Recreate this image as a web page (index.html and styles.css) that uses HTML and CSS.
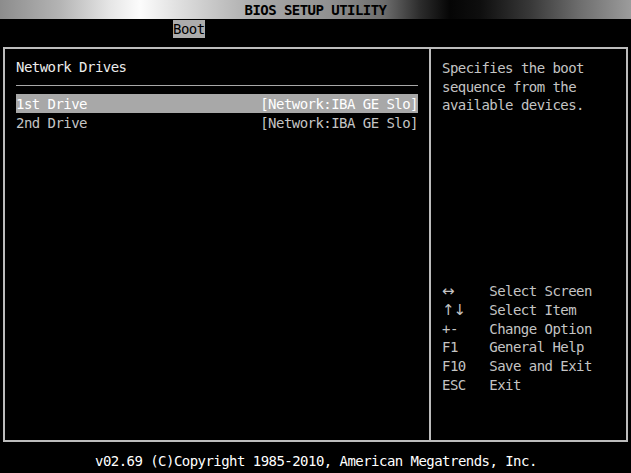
FILE: index.html
```html
<!DOCTYPE html>
<html lang="en">
<head>
<meta charset="utf-8">
<title>BIOS SETUP UTILITY</title>
<link rel="stylesheet" href="styles.css">
</head>
<body>
<div class="screen">
  <header class="titlebar">BIOS SETUP UTILITY</header>
  <nav class="menubar"><span class="tab">Boot</span></nav>
  <main class="frame">
    <section class="pane-left">
      <div class="row heading">Network Drives</div>
      <div class="row sep"><div class="rule"></div></div>
      <div class="row item selected"><span>1st Drive</span><span>[Network:IBA GE Slo]</span></div>
      <div class="row item"><span>2nd Drive</span><span>[Network:IBA GE Slo]</span></div>
    </section>
    <aside class="pane-right">
      <div class="help">
        <div class="row">Specifies the boot</div>
        <div class="row">sequence from the</div>
        <div class="row">available devices.</div>
      </div>
      <ul class="keys">
        <li class="row"><span class="key arrow">↔</span><span>Select Screen</span></li>
        <li class="row"><span class="key arrow">↑↓</span><span>Select Item</span></li>
        <li class="row"><span class="key">+-</span><span>Change Option</span></li>
        <li class="row"><span class="key">F1</span><span>General Help</span></li>
        <li class="row"><span class="key">F10</span><span>Save and Exit</span></li>
        <li class="row"><span class="key">ESC</span><span>Exit</span></li>
      </ul>
    </aside>
  </main>
  <footer class="footer">v02.69 (C)Copyright 1985-2010, American Megatrends, Inc.</footer>
</div>
</body>
</html>
```
FILE: styles.css
```css
html, body {
  margin: 0;
  padding: 0;
  background: #000;
}

.screen {
  width: 631px;
  height: 473px;
  background: #000;
  color: #c4c4c4;
  font-family: "DejaVu Sans Mono", "Liberation Mono", monospace;
  font-size: 14px;
  letter-spacing: -0.54px;
  overflow: hidden;
}

.titlebar {
  height: 19px;
  line-height: 20px;
  text-align: center;
  color: #000;
  font-weight: bold;
  background: linear-gradient(to right,
    #8c8c8c 0px, #b4b4b4 60px, #e6e6e6 110px, #fcfcfc 140px,
    #e2e2e2 175px, #c6c6c6 215px, #a8a8a8 260px, #909090 330px,
    #6c6c6c 385px, #2c2c2c 420px, #050505 450px, #0e0e0e 480px,
    #383838 530px, #6e6e6e 580px, #9c9c9c 631px);
}

.menubar {
  height: 19px;
  padding-left: 173px;
  display: flex;
  align-items: flex-end;
}

.tab {
  display: block;
  height: 18px;
  line-height: 19px;
  width: 32px;
  background: #acacac;
  color: #000;
}

.frame {
  box-sizing: border-box;
  margin: 9px 0 0 3px;
  width: 625px;
  height: 395px;
  border: 2px solid #bcbcbc;
  display: grid;
  grid-template-columns: 426px 1fr;
}

.pane-left {
  border-right: 2px solid #bcbcbc;
  padding: 8px 11px 0 11px;
}

.pane-right {
  padding: 9px 11px 0 11px;
}

.row {
  height: 18.7px;
  line-height: 20px;
  white-space: pre;
}

.heading {
  color: #ececec;
  line-height: 21px;
}

.sep {
  display: flex;
  align-items: center;
}

.rule {
  flex: 1;
  border-top: 1px solid #a8a8a8;
}

.item {
  display: flex;
  justify-content: space-between;
}

.selected {
  background: #a8a8a8;
  color: #fff;
}

.keys {
  list-style: none;
  margin: 167.3px 0 0 0;
  padding: 0;
}

.keys li {
  display: flex;
}

.key {
  width: 47.3px;
  flex: none;
}

.arrow {
  font-family: "DejaVu Sans", sans-serif;
  font-size: 15px;
  letter-spacing: -1px;
}

.footer {
  margin-top: 9.6px;
  height: 18.7px;
  line-height: 18.7px;
  padding-left: 95px;
  color: #fff;
  white-space: pre;
}
```
